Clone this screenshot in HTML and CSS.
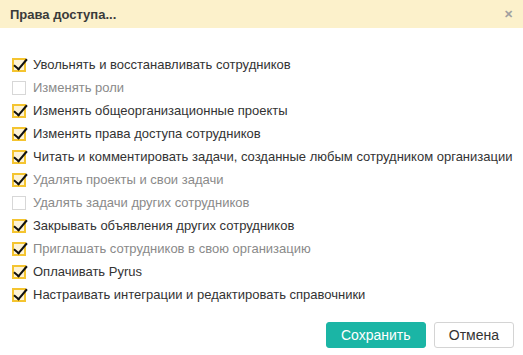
FILE: index.html
```html
<!DOCTYPE html>
<html lang="ru">
<head>
<meta charset="utf-8">
<title>Права доступа</title>
<link rel="stylesheet" href="styles.css">
</head>
<body>
<div class="dialog">
  <div class="header">
    <span class="title">Права доступа...</span>
    <span class="close">&#x2715;</span>
  </div>
  <ul class="list">
    <li class="item"><span class="box on"></span><span class="label">Увольнять и восстанавливать сотрудников</span></li>
    <li class="item dim"><span class="box"></span><span class="label">Изменять роли</span></li>
    <li class="item"><span class="box on"></span><span class="label">Изменять общеорганизационные проекты</span></li>
    <li class="item"><span class="box on"></span><span class="label">Изменять права доступа сотрудников</span></li>
    <li class="item"><span class="box on"></span><span class="label">Читать и комментировать задачи, созданные любым сотрудником организации</span></li>
    <li class="item dim"><span class="box on"></span><span class="label">Удалять проекты и свои задачи</span></li>
    <li class="item dim"><span class="box"></span><span class="label">Удалять задачи других сотрудников</span></li>
    <li class="item"><span class="box on"></span><span class="label">Закрывать объявления других сотрудников</span></li>
    <li class="item dim"><span class="box on"></span><span class="label">Приглашать сотрудников в свою организацию</span></li>
    <li class="item"><span class="box on"></span><span class="label">Оплачивать Pyrus</span></li>
    <li class="item"><span class="box on"></span><span class="label">Настраивать интеграции и редактировать справочники</span></li>
  </ul>
  <div class="footer">
    <button class="btn primary">Сохранить</button>
    <button class="btn">Отмена</button>
  </div>
</div>
</body>
</html>
```
FILE: styles.css
```css
html, body {
  margin: 0;
  padding: 0;
  background: #fff;
}
body {
  font-family: "Liberation Sans", Arial, sans-serif;
  color: #333;
  width: 523px;
  height: 355px;
  overflow: hidden;
}
.dialog {
  display: flex;
  flex-direction: column;
}
.header {
  height: 28px;
  background: #fcf1cb;
  display: flex;
  align-items: center;
  justify-content: space-between;
  padding: 0 10px 0 10px;
}
.title {
  font-size: 13px;
  font-weight: bold;
  color: #3a3a3a;
}
.close {
  font-size: 11px;
  font-weight: bold;
  color: #a0a0a0;
}
.list {
  list-style: none;
  margin: 0;
  padding: 25px 0 0 12px;
}
.item {
  height: 23px;
  display: flex;
  align-items: center;
  font-size: 13px;
  color: #333;
}
.item.dim {
  color: #8a8a8a;
}
.box {
  position: relative;
  box-sizing: border-box;
  width: 14px;
  height: 14px;
  border: 1px solid #d7d7d7;
  background: #fff;
  margin-right: 7px;
  flex: none;
}
.box.on {
  border: 2px solid #f4c430;
  background: #fdf3d6;
}
.box.on::after {
  content: "";
  position: absolute;
  left: 3px;
  top: -4px;
  width: 5px;
  height: 12px;
  border-right: 2px solid #111;
  border-bottom: 2px solid #111;
  transform: rotate(40deg);
}
.footer {
  display: flex;
  justify-content: flex-end;
  gap: 8px;
  padding: 16px 9px 0 0;
}
.btn {
  font-family: "Liberation Sans", Arial, sans-serif;
  font-size: 14px;
  height: 26px;
  padding: 0 14px;
  border: 1px solid #d4d4d4;
  border-radius: 3px;
  background: #fff;
  color: #333;
}
.btn.primary {
  width: 100px;
  background: #1bb5a5;
  border-color: #1bb5a5;
  color: #fff;
}
```
